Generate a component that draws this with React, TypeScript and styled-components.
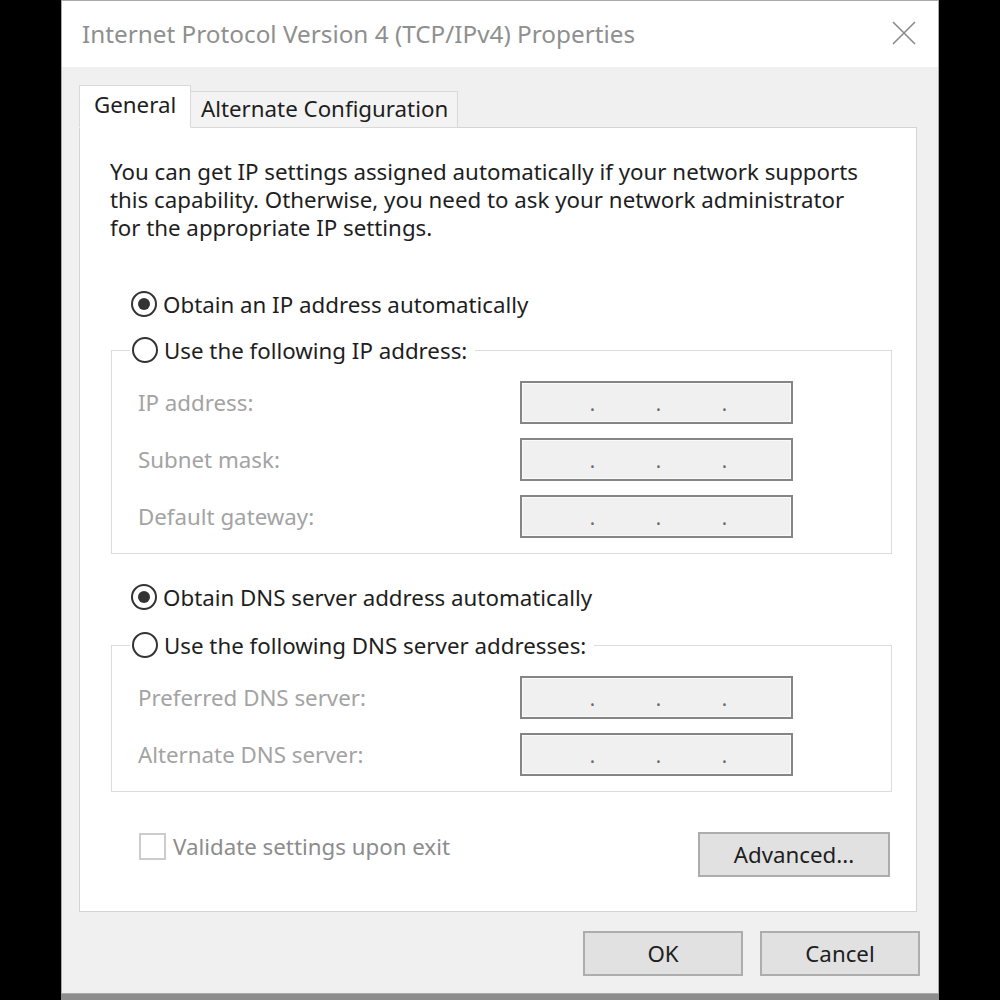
import React from 'react';
import styled, { createGlobalStyle } from 'styled-components';

const GlobalStyle = createGlobalStyle`
  html, body {
    margin: 0;
    padding: 0;
    background: #000;
  }
  body {
    font-family: 'Noto Sans', 'Open Sans', sans-serif;
  }
`;

const textSize = '22.3px';

const Page = styled.div`
  width: 1000px;
  height: 1000px;
  overflow: hidden;
  padding-left: 61px;
  box-sizing: border-box;
`;

const Dialog = styled.div`
  width: 878px;
  height: 994px;
  box-sizing: border-box;
  border: 1px solid #a9a9a9;
  background: #f0f0f0;
  display: flex;
  flex-direction: column;
`;

const BehindStrip = styled.div`
  width: 878px;
  height: 6px;
  background: #8d8d8d;
`;

const TitleBar = styled.div`
  height: 66px;
  background: #fff;
  display: flex;
  align-items: center;
  justify-content: space-between;
  padding: 0 22px 0 20px;
`;

const Title = styled.div`
  font-size: 24.3px;
  color: #8f8f8f;
  padding-bottom: 2px;
`;

const CloseIcon = styled.svg`
  width: 24px;
  height: 24px;
  margin-bottom: 2px;
`;

const Body = styled.div`
  padding: 18px 18px 0 17px;
`;

const TabRow = styled.div`
  display: flex;
  align-items: flex-end;
  margin-bottom: -1px;
  position: relative;
  z-index: 1;
`;

const Tab = styled.div<{ $active?: boolean }>`
  box-sizing: border-box;
  height: ${(p) => (p.$active ? '43px' : '37px')};
  width: ${(p) => (p.$active ? '112px' : '267px')};
  background: ${(p) => (p.$active ? '#fff' : '#f3f3f3')};
  border: 1px solid #d9d9d9;
  border-bottom: ${(p) => (p.$active ? '1px solid #fff' : '1px solid #d9d9d9')};
  border-left: ${(p) => (p.$active ? '1px solid #d9d9d9' : 'none')};
  font-size: ${textSize};
  color: #1e1e1e;
  padding-left: ${(p) => (p.$active ? '14px' : '10px')};
  line-height: ${(p) => (p.$active ? '38px' : '34px')};
  white-space: nowrap;
`;

const Panel = styled.div`
  box-sizing: border-box;
  width: 838px;
  height: 785px;
  background: #fff;
  border: 1px solid #d4d4d4;
  padding: 0 24px 0 31px;
  display: flex;
  flex-direction: column;
`;

const Intro = styled.p`
  margin: 30px 0 0 -1px;
  font-size: ${textSize};
  line-height: 28px;
  color: #1e1e1e;
  white-space: nowrap;
`;

const RadioRow = styled.label<{ $top: number }>`
  display: flex;
  align-items: center;
  height: 30px;
  margin-top: ${(p) => p.$top}px;
  padding-left: 20px;
  font-size: ${textSize};
  color: #1e1e1e;
  white-space: nowrap;
`;

const RadioDot = styled.span<{ $checked?: boolean }>`
  box-sizing: border-box;
  flex: none;
  width: 26px;
  height: 26px;
  border-radius: 50%;
  border: 2px solid #333;
  margin-right: 6px;
  display: flex;
  align-items: center;
  justify-content: center;
  background: #fff;
  &::after {
    content: '';
    width: 12px;
    height: 12px;
    border-radius: 50%;
    background: ${(p) => (p.$checked ? '#333' : 'transparent')};
  }
`;

const Group = styled.fieldset<{ $top: number }>`
  margin: ${(p) => p.$top}px 0 0 0;
  padding: 16px 0 15px 0;
  border: 1px solid #dcdcdc;
  min-width: 0;
`;

const Legend = styled.legend`
  margin-left: 18px;
  padding: 0 8px 0 2px;
  display: flex;
  align-items: center;
  height: 30px;
  font-size: ${textSize};
  color: #1e1e1e;
  white-space: nowrap;
`;

const FieldList = styled.div`
  display: flex;
  flex-direction: column;
  gap: 14px;
`;

const FieldRow = styled.div`
  display: grid;
  grid-template-columns: 408px 273px;
  align-items: center;
`;

const FieldLabel = styled.span`
  padding-left: 26px;
  font-size: ${textSize};
  color: #a3a3a3;
  white-space: nowrap;
`;

const IpBox = styled.div`
  box-sizing: border-box;
  height: 43px;
  border: 2px solid #858585;
  background: #f0f0f0;
  box-shadow: inset 0 0 0 1px #fafafa;
  display: flex;
  padding-left: 6px;
  padding-top: 8px;
`;

const Octet = styled.span`
  width: 63px;
`;

const Dot = styled.span`
  width: 3px;
  font-size: 20px;
  color: #6a6a6a;
  line-height: 26px;
  display: flex;
  justify-content: center;
`;

const Footer = styled.div`
  display: flex;
  justify-content: space-between;
  align-items: flex-start;
  margin: 40px 2px 0 0;
`;

const CheckRow = styled.label`
  display: flex;
  align-items: center;
  margin-top: -1px;
  padding-left: 28px;
  font-size: ${textSize};
  color: #8c8c8c;
  white-space: nowrap;
`;

const CheckBox = styled.span`
  box-sizing: border-box;
  width: 27px;
  height: 27px;
  border: 2px solid #cccccc;
  margin-right: 7px;
  background: #fff;
`;

const Button = styled.div<{ $width: number }>`
  box-sizing: border-box;
  width: ${(p) => p.$width}px;
  height: 45px;
  background: #e1e1e1;
  border: 2px solid #adadad;
  display: flex;
  align-items: center;
  justify-content: center;
  font-size: ${textSize};
  color: #1e1e1e;
`;

const ButtonBar = styled.div`
  display: flex;
  justify-content: flex-end;
  gap: 17px;
  padding-top: 19px;
`;

const IpInput: React.FC = () => (
  <IpBox>
    <Octet />
    <Dot>.</Dot>
    <Octet />
    <Dot>.</Dot>
    <Octet />
    <Dot>.</Dot>
  </IpBox>
);

const ipFields = ['IP address:', 'Subnet mask:', 'Default gateway:'];
const dnsFields = ['Preferred DNS server:', 'Alternate DNS server:'];

const App: React.FC = () => {
  return (
    <Page>
      <GlobalStyle />
      <Dialog>
        <TitleBar>
          <Title>Internet Protocol Version 4 (TCP/IPv4) Properties</Title>
          <CloseIcon viewBox="0 0 24 24">
            <path d="M1 1 L23 23 M23 1 L1 23" stroke="#8a8a8a" strokeWidth="1.6" fill="none" />
          </CloseIcon>
        </TitleBar>
        <Body>
          <TabRow>
            <Tab $active>General</Tab>
            <Tab>Alternate Configuration</Tab>
          </TabRow>
          <Panel>
            <Intro>
              You can get IP settings assigned automatically if your network supports
              <br />
              this capability. Otherwise, you need to ask your network administrator
              <br />
              for the appropriate IP settings.
            </Intro>

            <RadioRow $top={47}>
              <RadioDot $checked />
              Obtain an IP address automatically
            </RadioRow>
            <Group $top={16}>
              <Legend>
                <RadioDot />
                Use the following IP address:
              </Legend>
              <FieldList>
                {ipFields.map((f) => (
                  <FieldRow key={f}>
                    <FieldLabel>{f}</FieldLabel>
                    <IpInput />
                  </FieldRow>
                ))}
              </FieldList>
            </Group>

            <RadioRow $top={28}>
              <RadioDot $checked />
              Obtain DNS server address automatically
            </RadioRow>
            <Group $top={18}>
              <Legend>
                <RadioDot />
                Use the following DNS server addresses:
              </Legend>
              <FieldList>
                {dnsFields.map((f) => (
                  <FieldRow key={f}>
                    <FieldLabel>{f}</FieldLabel>
                    <IpInput />
                  </FieldRow>
                ))}
              </FieldList>
            </Group>

            <Footer>
              <CheckRow>
                <CheckBox />
                Validate settings upon exit
              </CheckRow>
              <Button $width={192}>Advanced...</Button>
            </Footer>
          </Panel>
          <ButtonBar>
            <Button $width={160}>OK</Button>
            <Button $width={160}>Cancel</Button>
          </ButtonBar>
        </Body>
      </Dialog>
      <BehindStrip />
    </Page>
  );
};

export default App;
